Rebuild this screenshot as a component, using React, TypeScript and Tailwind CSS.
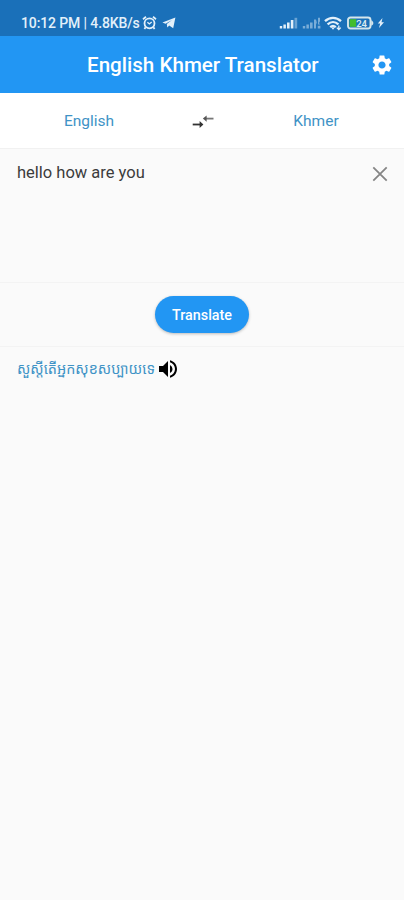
import React from 'react';
import { MdSettings, MdVolumeUp } from 'react-icons/md';

function StatusBar() {
  return (
    <div className="flex h-9 items-end justify-between bg-[#1a70b9] pr-[19px] pb-[4px] pl-[21px] text-[#e3f0fa]">
      <div className="flex h-[18px] items-center">
        <span className="w-[119px] text-[14px] leading-[18px] font-medium tracking-[-0.12px] whitespace-nowrap">10:12 PM | 4.8KB/s</span>
        <svg className="ml-[2px]" width="15" height="16" viewBox="0 0 15 16" fill="none" stroke="currentColor" strokeWidth="1.8">
          <circle cx="7.5" cy="8.3" r="5" />
          <path d="M1 4.2 4 1.8M14 4.2 11 1.8M3.6 12.3 2.4 14M11.4 12.3l1.2 1.7" />
          <path d="m5.4 7.2 2 1.8 2.3-2" strokeWidth="1.3" />
        </svg>
        <svg className="ml-[5px]" width="14" height="14" viewBox="0 0 14 14" fill="currentColor">
          <path d="M13.4 1.5 11.2 12.3 7.2 9.6 5.3 11.4 4.8 8 10 4.1 3.6 7.7.4 6.6Z" />
        </svg>
      </div>
      <div className="flex h-[18px] items-center">
        <svg width="19" height="12" viewBox="0 0 19 12" fill="currentColor">
          <path d="M.8 9h2.4v2.5H.8zM4.4 7.5h2.5v4H4.4zM8 5.5h2.6v6H8zM11.8 3h2.6v8.5h-2.6z" />
          <path d="M15.5.8h2.7v10.7h-2.7z" opacity=".4" />
        </svg>
        <svg className="ml-[4px]" width="19" height="12" viewBox="0 0 19 12" fill="currentColor" opacity=".48">
          <path d="M.8 9h2.4v2.5H.8zM4.4 7.5h2.5v4H4.4zM8 5.5h2.6v6H8zM12 2.5h2l.8 3-.8 2v4h-2zM16 .8h2v3.4l-1 1.8 1 1.6h-2zM15.8 8.7h2.6v2.8h-2.6z" />
        </svg>
        <svg className="ml-[3px]" width="19" height="15" viewBox="0 0 19 15" fill="none" stroke="currentColor" strokeWidth="2.3">
          <path d="M1 5.2c4.7-4.5 11.3-4.5 16 0M3.6 8.4c3.2-3 7.6-3 10.8 0M6.2 11.2c1.7-1.5 3.9-1.5 5.6 0" />
          <path d="m7.2 11.4 1.8 2.4 1.8-2.4z" fill="currentColor" stroke="none" />
          <path d="M14.8 9.5v4M12.8 11.6l2 2 2-2" strokeWidth="1.3" />
        </svg>
        <svg className="ml-[4px]" width="27" height="14" viewBox="0 0 27 14">
          <rect x="1" y="1.5" width="22.5" height="11" rx="2.5" fill="none" stroke="#d5e6ec" strokeWidth="1.9" />
          <path d="M24.2 4.2c2.8 1 2.8 4.6 0 5.6z" fill="#d5e6ec" />
          <rect x="2.7" y="3.2" width="6.5" height="7.6" fill="#42bd2d" />
          <text x="9.2" y="10.6" fontSize="9.5" fontWeight="600" fill="#dceaf0">24</text>
        </svg>
        <svg className="ml-[3px]" width="8" height="12" viewBox="0 0 8 12" fill="currentColor">
          <path d="M5.5 1 .8 6.6h2.4L2 11l5-5.8H4.5Z" />
        </svg>
      </div>
    </div>
  );
}

function SwapArrows() {
  return (
    <svg width="22" height="14" viewBox="0 0 22 14" fill="none" strokeWidth="1.8">
      <path d="M.7 9.5H9" stroke="#333" />
      <path d="m7.6 6.1 3.8 3.4-3.8 3.4Z" fill="#333" />
      <path d="M14 3.6h7.5" stroke="#777" />
      <path d="M14.6.4 10.9 3.6l3.7 3.2Z" fill="#555" />
    </svg>
  );
}

export default function App() {
  return (
    <div className="flex h-[900px] w-[404px] flex-col bg-[#fafafa] font-['Roboto','Noto_Sans_Khmer','Noto_Sans',sans-serif]">
      <StatusBar />
      <header className="flex h-[57px] items-center justify-between bg-[#2296f3] pr-[10px] pl-[87px] text-white">
        <h1 className="text-[20.6px] leading-7 font-medium whitespace-nowrap">English Khmer Translator</h1>
        <MdSettings size={24} />
      </header>
      <div className="flex h-14 items-center border-b border-[#f1f1f1] bg-white pt-[2px] text-[15.5px] text-[#3f93c6]">
        <span className="w-[178px] text-center">English</span>
        <span className="flex w-[50px] justify-center">
          <SwapArrows />
        </span>
        <span className="w-[176px] text-center">Khmer</span>
      </div>
      <div className="flex h-[134px] items-start justify-between border-b border-[#f3f3f3] pr-[16px] pl-[17px] text-[#3c3c3c]">
        <p className="pt-[12px] text-[16.5px] leading-6">hello how are you</p>
        <svg className="mt-[17px]" width="16" height="16" viewBox="0 0 16 16" stroke="#858585" strokeWidth="1.8">
          <path d="m1.3 1.3 13.4 13.4M14.7 1.3 1.3 14.7" />
        </svg>
      </div>
      <div className="flex h-16 items-center justify-center border-b border-[#f3f3f3]">
        <button className="h-[37px] w-[94px] rounded-full bg-[#2296f3] pt-[2px] text-[14.3px] font-medium text-white shadow-[0_1px_3px_rgba(0,0,0,0.25)]">
          Translate
        </button>
      </div>
      <div className="flex items-start pt-[10px] pl-[17px]">
        <span className="w-[139px] pt-px text-[14.4px] leading-6 whitespace-nowrap text-[#3f93c6]">សួស្តីតើអ្នកសុខសប្បាយទេ</span>
        <MdVolumeUp className="text-black" size={24} />
      </div>
    </div>
  );
}
